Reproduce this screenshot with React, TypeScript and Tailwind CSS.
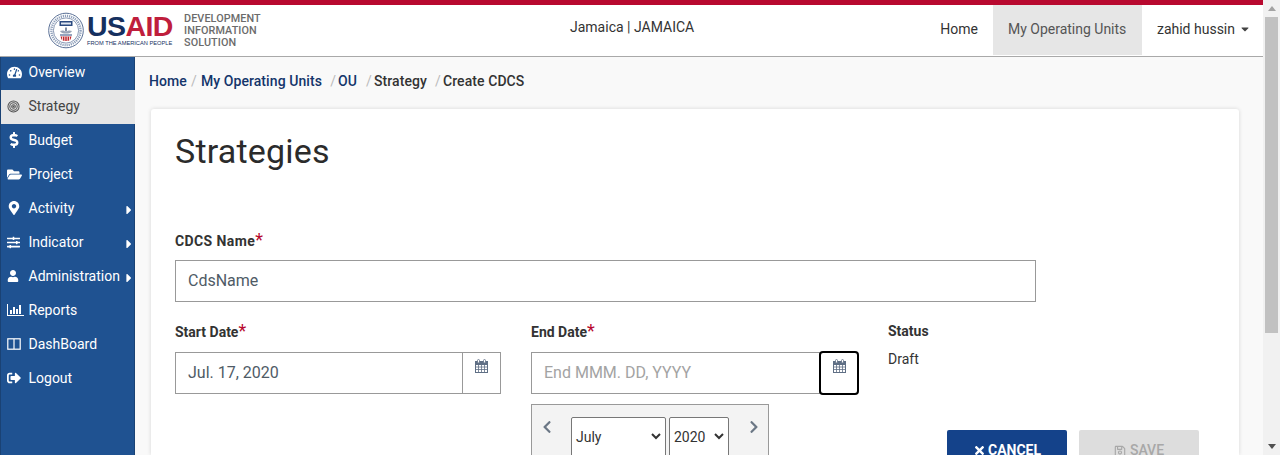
import React from "react";
import {
  FaTachometerAlt, FaDollarSign, FaFolderOpen, FaMapMarkerAlt, FaSlidersH, FaUser,
  FaSignOutAlt, FaCaretRight, FaCaretDown, FaChevronLeft,
  FaChevronRight, FaTimes, FaRegSave,
} from "react-icons/fa";

function Target() {
  return (
    <svg width="13" height="13" viewBox="0 0 14 14" fill="none" stroke="#555" strokeWidth="1.1">
      <circle cx="7" cy="7" r="6" />
      <circle cx="7" cy="7" r="4" />
      <circle cx="7" cy="7" r="2" />
      <circle cx="7" cy="7" r="0.6" fill="#555" />
    </svg>
  );
}

function Columns() {
  return (
    <svg width="14" height="12" viewBox="0 0 14 12" fill="none" stroke="#fff" strokeWidth="1.2">
      <rect x="0.8" y="0.8" width="12.4" height="10.4" />
      <path d="M7 1v10" />
    </svg>
  );
}

function BarsIcon() {
  return (
    <svg width="17" height="12" viewBox="0 0 17 12" fill="#fff">
      <path d="M0 0h1v11h16v1H0z" />
      <rect x="3" y="6" width="2" height="4" />
      <rect x="6" y="3" width="2" height="7" />
      <rect x="9" y="5" width="2" height="5" />
      <rect x="12" y="1" width="2" height="9" />
    </svg>
  );
}

function Seal() {
  return (
    <svg width="36" height="37" viewBox="0 0 36 37" className="shrink-0">
      <circle cx="18" cy="18.5" r="17.3" fill="#fff" stroke="#5a7096" strokeWidth="1" />
      <circle cx="18" cy="18.5" r="14.6" fill="none" stroke="#8fa0bb" strokeWidth="2.4" strokeDasharray="1.2 0.9" />
      <circle cx="18" cy="18.5" r="12.6" fill="#fff" stroke="#5a7096" strokeWidth="0.7" />
      <rect x="11.500" y="9" width="13" height="5" fill="#2b4a80" />
      <rect x="13" y="10.500" width="10" height="2" fill="#dfe5ef" />
      <path d="M12 19c2.500-1 4.500-.5 6 1 1.500-1.500 3.500-2 6-1-1 2-3 2.500-6 2.500s-5-.5-6-2.500z" fill="#9aa5b8" />
      <rect x="17" y="15.500" width="2" height="4" fill="#7c8aa3" />
      <rect x="12" y="22.500" width="12" height="1" fill="#2b4a80" />
      <path d="M12.500 24.500h11l-1 3-2.500 1.500h-4l-2.500-1.500z" fill="#c1272d" />
      <path d="M14.500 24.500v3.500M16.800 24.500v4.500M19.200 24.500v4.500M21.500 24.500v3.500" stroke="#fff" strokeWidth="0.8" />
    </svg>
  );
}

function Logo() {
  return (
    <div className="flex items-center gap-[3px] w-[124px] shrink-0">
      <Seal />
      <div className="flex flex-col items-start shrink-0">
        <div className="h-[24px] flex items-center text-[28.5px] leading-none font-bold tracking-[-0.6px] font-['Liberation_Sans',sans-serif]">
          <span className="text-[#16305f]">US</span>
          <span className="text-[#bf1e3c]">AID</span>
        </div>
        <div className="text-[5.7px] leading-[7px] mt-[1px] text-[#16305f] whitespace-nowrap font-['Liberation_Sans',sans-serif]">
          FROM THE AMERICAN PEOPLE
        </div>
      </div>
    </div>
  );
}

const items = [
  { label: "Overview", icon: <FaTachometerAlt size={15} /> },
  { label: "Strategy", icon: <Target />, active: true },
  { label: "Budget", icon: <FaDollarSign size={16} className="-ml-[1px]" /> },
  { label: "Project", icon: <FaFolderOpen size={15} /> },
  { label: "Activity", icon: <FaMapMarkerAlt size={14} />, arrow: true },
  { label: "Indicator", icon: <FaSlidersH size={13} />, arrow: true },
  { label: "Administration", icon: <FaUser size={12} />, arrow: true },
  { label: "Reports", icon: <BarsIcon /> },
  { label: "DashBoard", icon: <Columns /> },
  { label: "Logout", icon: <FaSignOutAlt size={14} /> },
];

function Sidebar() {
  return (
    <aside className="w-[135px] shrink-0 bg-[#1f5291] border-l border-r border-[#1a4274] relative">
      {items.map((it) => (
        <div
          key={it.label}
          className={
            it.active
              ? "h-[34px] flex items-center pl-[6px] pb-[2px] text-[14px] bg-[#e6e6e6] text-[#444] -mr-[1px] relative"
              : "h-[34px] flex items-center pl-[6px] pb-[2px] text-[14px] text-white"
          }
        >
          <span className="w-[21.5px] shrink-0 flex items-center">{it.icon}</span>
          <span className="whitespace-nowrap">{it.label}</span>
          {it.arrow && (
            <span className="ml-auto mr-[-2px] mt-[4px] flex">
              <FaCaretRight size={14} />
            </span>
          )}
        </div>
      ))}
    </aside>
  );
}

function Header() {
  return (
    <header className="h-[51px] bg-white shadow-[0_1px_0_#a9a9a9] flex relative z-10">
      <div className="pl-[48px] pt-[7px] flex items-start">
        <Logo />
        <div className="ml-[12px] mt-[1px] text-[10.8px] leading-[12px] text-[#6b6b6b] font-medium tracking-[0.1px]">
          <div>DEVELOPMENT</div>
          <div>INFORMATION</div>
          <div>SOLUTION</div>
        </div>
      </div>
      <div className="absolute left-[570px] top-[13px] text-[14px] leading-[18px] text-[#333] whitespace-nowrap">
        Jamaica | JAMAICA
      </div>
      <nav className="ml-auto flex items-start text-[14px] h-[50px] pr-[12px]">
        <div className="px-[15px] pb-[2px] h-full flex items-center text-[#333]">Home</div>
        <div className="px-[15px] pb-[2px] h-full flex items-center text-[#555] bg-[#e6e6e6] w-[149px]">My Operating Units</div>
        <div className="pl-[15px] pb-[2px] h-full flex items-center text-[#333]">
          zahid hussin
          <FaCaretDown size={12} className="ml-[4px] text-[#444]" />
        </div>
      </nav>
    </header>
  );
}

function Crumb() {
  return (
    <div className="h-[53px] pl-[14px] flex items-start pt-[16px] text-[14px] leading-[18px] text-[#333] font-medium whitespace-nowrap tracking-[0.08px]">
      <span className="text-[#14356b]">Home</span>
      <span className="w-[14px] text-center font-normal text-[#bbb]">/</span>
      <span className="text-[#14356b]">My Operating Units</span>
      <span className="w-[16px] text-right pr-[2px] font-normal text-[#bbb]">/</span>
      <span className="text-[#14356b]">OU</span>
      <span className="w-[17px] text-right pr-[2px] font-normal text-[#bbb]">/</span>
      <span>Strategy</span>
      <span className="w-[16px] text-right pr-[2px] font-normal text-[#bbb]">/</span>
      <span>Create CDCS</span>
    </div>
  );
}

function Label({ text, star = true, wide = false }: { text: string; star?: boolean; wide?: boolean }) {
  return (
    <div className={wide
      ? "h-[22px] text-[14px] leading-[22px] font-bold text-[#333] whitespace-nowrap tracking-[0.4px]"
      : "h-[22px] text-[14px] leading-[22px] font-bold text-[#333] whitespace-nowrap"}>
      {text}
      {star && <span className="text-[#b8092f] font-normal text-[18px] leading-[18px]">*</span>}
    </div>
  );
}

function CalIcon() {
  return (
    <svg width="13" height="14" viewBox="0 0 13 14" fill="none" className="shrink-0">
      <rect x="0.5" y="2.500" width="12" height="11" fill="#fff" stroke="#5f6f85" />
      <rect x="0.5" y="2.500" width="12" height="3" fill="#5f6f85" stroke="#5f6f85" />
      <path d="M0.500 8h12M0.500 10.500h12M3.500 5.500v8M6.500 5.500v8M9.500 5.500v8" stroke="#5f6f85" strokeWidth="0.8" />
      <rect x="2.500" y="0.500" width="2" height="3.500" rx="1" fill="#fff" stroke="#5f6f85" strokeWidth="0.8" />
      <rect x="8.500" y="0.500" width="2" height="3.500" rx="1" fill="#fff" stroke="#5f6f85" strokeWidth="0.8" />
    </svg>
  );
}

function Card() {
  return (
    <div className="ml-[16px] mr-[24px] flex-1 bg-white rounded-t-[3px] shadow-[0_0_4px_rgba(0,0,0,0.14)] pl-[24px] overflow-hidden">
      <h1 className="mt-[21px] h-[42px] text-[34px] leading-[42px] font-normal text-[#2b2b2b] tracking-[0.2px]">Strategies</h1>
      <div className="mt-[58px]">
        <Label text="CDCS Name" wide />
      </div>
      <div className="mt-[8px] w-[861px] h-[42px] border border-[#999] flex items-center pl-[12px] text-[16px] text-[#4f5b66]">
        CdsName
      </div>
      <div className="mt-[19px] flex items-start">
        <div className="w-[356px] shrink-0">
          <Label text="Start Date" />
          <div className="mt-[9px] w-[326px] h-[42px] border border-[#999] flex">
            <div className="flex-1 pl-[12px] flex items-center text-[16px] text-[#4f5b66]">Jul. 17, 2020</div>
            <div className="w-[38px] border-l border-[#999] flex justify-center pt-[6px]">
              <CalIcon />
            </div>
          </div>
        </div>
        <div className="w-[357px] shrink-0">
          <Label text="End Date" />
          <div className="mt-[8px] flex items-center h-[44px]">
            <div className="w-[289px] h-[42px] border border-[#999] pl-[12px] flex items-center text-[16px] text-[#a3a3a3]">
              End MMM. DD, YYYY
            </div>
            <div className="w-[40px] h-[44px] border-2 border-black rounded-[4px] flex justify-center pt-[6px] -ml-[1px]">
              <CalIcon />
            </div>
          </div>
          <div className="mt-[9px] w-[238px] h-[80px] bg-[#f3f3f3] border border-[#999] flex items-start pt-[12px] pl-[8px]">
            <FaChevronLeft size={14} className="mt-[3px] text-[#6b7785]" />
            <div className="ml-[17px] w-[95px] h-[60px] bg-white border border-[#777] rounded-[2px] pl-[4px] pt-[9px] text-[14px] leading-[20px] text-[#333] relative">
              July
              <svg className="absolute right-[4px] top-[15px]" width="10" height="7" viewBox="0 0 10 7" fill="none" stroke="#333" strokeWidth="2"><path d="M1 1l4 4 4-4" /></svg>
            </div>
            <div className="ml-[3px] w-[60px] h-[60px] bg-white border border-[#777] rounded-[2px] pl-[4px] pt-[9px] text-[14px] leading-[20px] text-[#333] relative">
              2020
              <svg className="absolute right-[4px] top-[15px]" width="10" height="7" viewBox="0 0 10 7" fill="none" stroke="#333" strokeWidth="2"><path d="M1 1l4 4 4-4" /></svg>
            </div>
            <FaChevronRight size={14} className="ml-[18px] mt-[3px] text-[#6b7785]" />
          </div>
        </div>
        <div className="flex-1">
          <div className="-mt-[1px]">
            <Label text="Status" star={false} />
          </div>
          <div className="mt-[7px] text-[14px] leading-[20px] text-[#333]">Draft</div>
          <div className="mt-[61px] ml-[59px] flex gap-[12px]">
            <div className="w-[120px] h-[40px] bg-[#14428a] rounded-[2px] text-white text-[14px] font-bold flex items-start justify-center pt-[11px] leading-[18px]">
              <FaTimes size={13} className="mr-[2px] mt-[3px]" />
              CANCEL
            </div>
            <div className="w-[120px] h-[40px] bg-[#dddddd] rounded-[2px] text-[#a8a8a8] text-[14px] font-medium flex items-start justify-center pt-[11px] leading-[18px]">
              <FaRegSave size={12} className="mr-[4px] mt-[4px]" />
              SAVE
            </div>
          </div>
        </div>
      </div>
    </div>
  );
}

function Scrollbar() {
  return (
    <div className="w-[17px] shrink-0 bg-[#f1f1f1] flex flex-col items-center relative">
      <div className="h-[17px] flex items-center justify-center">
        <div className="w-0 h-0 border-l-[4px] border-r-[4px] border-b-[5px] border-l-transparent border-r-transparent border-b-[#a3a3a3]" />
      </div>
      <div className="w-[13px] h-[316px] bg-[#c1c1c1] mx-auto" />
      <div className="mt-auto h-[17px] flex items-center justify-center">
        <div className="w-0 h-0 border-l-[4px] border-r-[4px] border-t-[5px] border-l-transparent border-r-transparent border-t-[#505050]" />
      </div>
    </div>
  );
}

export default function App() {
  return (
    <div className="w-[1280px] h-[455px] overflow-hidden flex font-['Roboto',sans-serif] bg-[#f9f9f9]">
      <div className="flex-1 min-w-0 flex flex-col">
        <div className="h-[5px] bg-[#b8092f] shrink-0" />
        <Header />
        <div className="flex-1 flex min-h-0">
          <Sidebar />
          <main className="flex-1 min-w-0 flex flex-col">
            <Crumb />
            <Card />
          </main>
        </div>
      </div>
      <Scrollbar />
    </div>
  );
}
